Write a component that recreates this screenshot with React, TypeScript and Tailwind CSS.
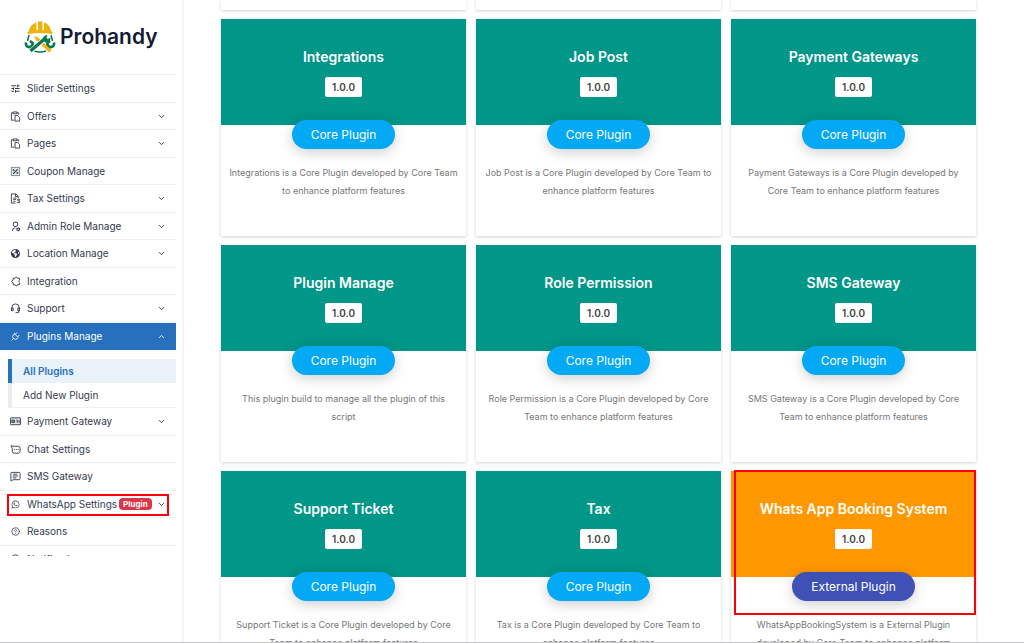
import React from "react";
import { ChevronDown, ChevronUp, CircleQuestionMark, MessageSquareText } from "lucide-react";
import { FaEarthAmericas, FaWhatsapp } from "react-icons/fa6";
import { MdTune } from "react-icons/md";
import { RiUserSettingsLine } from "react-icons/ri";
import { TbPlug } from "react-icons/tb";

type NavItem = {
  label: string;
  icon: React.ReactNode;
  expandable?: boolean;
  active?: boolean;
  badge?: string;
  children?: { label: string; active?: boolean }[];
};

type Plugin = {
  name: string;
  version: string;
  description: string[];
  external?: boolean;
  highlighted?: boolean;
};

const LineIcon: React.FC<{ children: React.ReactNode }> = ({ children }) => (
  <svg viewBox="0 0 24 24" fill="none" stroke="currentColor" strokeWidth="2" className="w-full h-full">
    {children}
  </svg>
);

const ClipboardIcon = () => (
  <LineIcon>
    <path d="M9 20H3V4h4M15 4h4v4" />
    <path d="M7 2h8v4H7zM11 10h6l4 4v8H11z" />
  </LineIcon>
);

const PercentIcon = () => (
  <LineIcon>
    <rect x="3" y="3" width="18" height="18" strokeOpacity="0.6" fill="currentColor" fillOpacity="0.12" />
    <path d="M17 7L7 17" strokeWidth="2.5" />
    <circle cx="8" cy="9" r="1.5" />
    <circle cx="16" cy="15" r="1.5" />
  </LineIcon>
);

const InvoiceIcon = () => (
  <LineIcon>
    <path d="M12 22H3V2h10l5 5v4M12 2v6h6M7 11h7M7 14h6M7 18h5" />
    <path d="M22 14h-5v3h4v4h-6" />
  </LineIcon>
);

const PuzzleIcon = () => (
  <LineIcon>
    <path d="M7 5h4a2.5 2.5 0 0 1 5 0h5v4a3.5 3.5 0 0 0 0 6v4h-5a2.5 2.5 0 0 1-5 0H7v-4a3 3 0 1 1 0-6z" />
  </LineIcon>
);

const HeadsetIcon = () => (
  <LineIcon>
    <path d="M4 16V10a8 8 0 0 1 16 0v6" />
    <path d="M3 11h4v6H3zM17 11h4v6h-4z" />
    <path d="M19 17v4h-7" />
  </LineIcon>
);

const CardIcon = () => (
  <LineIcon>
    <rect x="1" y="4" width="22" height="15" rx="1" fill="currentColor" fillOpacity="0.15" />
    <path d="M4 9h6v5H4zM7 9v6M14 9h2v6M20 9v6" />
  </LineIcon>
);

const ChatIcon = () => (
  <LineIcon>
    <path d="M2 4l3 5v7a4 4 0 0 0 4 4h9a4 4 0 0 0 4-4V9a4 4 0 0 0-4-4H9z" />
    <path d="M9 12h2M13 12h2M17 12h2" />
  </LineIcon>
);

const HardHatLogo = () => (
  <svg viewBox="0 0 32 32" className="w-8 h-8" aria-hidden="true">
    <g fill="none" stroke="#08794c">
      <path d="M5 14l-1.500 6M27 14l1.500 6" strokeWidth="1.5" />
      <path d="M10 30q6 2 12 0" strokeWidth="1.5" />
      <path d="M2 21.500q-.5 5 4 4.500 3-.5 2.500-4L6 20M30 21.500q.5 5-4 4.500-3-.5-2.500-4L26 20" strokeWidth="2.8" />
    </g>
    <path d="M10 15l4 1.500L27.500 29 25.500 31.500 12 19z" fill="#eeb20d" />
    <path d="M7 30L21 17.500" stroke="#fff" strokeWidth="5" />
    <path d="M6.500 30L21 17.500" stroke="#08794c" strokeWidth="3.2" />
    <path d="M19 19.500q-1-5 4.500-5.500l-1 3 1.500 1 2.500-1.500q0 5-5 5z" fill="#08794c" />
    <path d="M3 11.500l2-1.500C5.500 5.500 9 2.500 12.500 1.500V9H14V.5h4.500V9H20V1.500C23.500 2.500 26.500 5.500 27 10l2 1.500-1.500 1.500q-11.500-2-23 0z" fill="#eeb20d" />
  </svg>
);

const navItems: NavItem[] = [
  { label: "Slider Settings", icon: <MdTune /> },
  { label: "Offers", icon: <ClipboardIcon />, expandable: true },
  { label: "Pages", icon: <ClipboardIcon />, expandable: true },
  { label: "Coupon Manage", icon: <PercentIcon /> },
  { label: "Tax Settings", icon: <InvoiceIcon />, expandable: true },
  { label: "Admin Role Manage", icon: <RiUserSettingsLine />, expandable: true },
  { label: "Location Manage", icon: <FaEarthAmericas className="p-px" />, expandable: true },
  { label: "Integration", icon: <PuzzleIcon /> },
  { label: "Support", icon: <HeadsetIcon />, expandable: true },
  {
    label: "Plugins Manage",
    icon: <TbPlug />,
    expandable: true,
    active: true,
    children: [{ label: "All Plugins", active: true }, { label: "Add New Plugin" }],
  },
  { label: "Payment Gateway", icon: <CardIcon />, expandable: true },
  { label: "Chat Settings", icon: <ChatIcon /> },
  { label: "SMS Gateway", icon: <MessageSquareText className="w-full h-full" /> },
  { label: "WhatsApp Settings", icon: <FaWhatsapp className="p-px" />, expandable: true, badge: "Plugin" },
  { label: "Reasons", icon: <CircleQuestionMark className="w-full h-full p-px" /> },
  { label: "Notifications", icon: <CircleQuestionMark className="w-full h-full" /> },
];

const plugins: Plugin[] = [
  { name: "Integrations", version: "1.0.0", description: ["Integrations is a Core Plugin developed by Core Team", "to enhance platform features"] },
  { name: "Job Post", version: "1.0.0", description: ["Job Post is a Core Plugin developed by Core Team to", "enhance platform features"] },
  { name: "Payment Gateways", version: "1.0.0", description: ["Payment Gateways is a Core Plugin developed by", "Core Team to enhance platform features"] },
  { name: "Plugin Manage", version: "1.0.0", description: ["This plugin build to manage all the plugin of this", "script"] },
  { name: "Role Permission", version: "1.0.0", description: ["Role Permission is a Core Plugin developed by Core", "Team to enhance platform features"] },
  { name: "SMS Gateway", version: "1.0.0", description: ["SMS Gateway is a Core Plugin developed by Core", "Team to enhance platform features"] },
  { name: "Support Ticket", version: "1.0.0", description: ["Support Ticket is a Core Plugin developed by Core", "Team to enhance platform features"] },
  { name: "Tax", version: "1.0.0", description: ["Tax is a Core Plugin developed by Core Team to", "enhance platform features"] },
  {
    name: "Whats App Booking System",
    version: "1.0.0",
    description: ["WhatsAppBookingSystem is a External Plugin", "developed by Core Team to enhance platform"],
    external: true,
    highlighted: true,
  },
];

const SidebarItem: React.FC<{ item: NavItem }> = ({ item }) => {
  const Chevron = item.active ? ChevronUp : ChevronDown;

  return (
    <li className="group relative">
      <button
        type="button"
        aria-expanded={item.expandable ? !!item.active : undefined}
        className={`flex h-[27px] w-full items-center border-b px-[10px] text-left group-odd:h-7 cursor-pointer ${
          item.active ? "border-[#2670be] bg-[#2670be] text-white" : "border-[#f0f0f2] text-[#343b4f]"
        }`}
      >
        <span className="mr-[6px] h-[11px] w-[11px] shrink-0 text-[11px]">{item.icon}</span>
        <span className="whitespace-nowrap">{item.label}</span>
        {item.badge && (
          <span className="ml-[2px] rounded-sm bg-[#dc3545] px-1 text-[8px] leading-3 font-bold text-white">
            {item.badge}
          </span>
        )}
        {item.expandable && <Chevron className="ml-auto h-[9px] w-[9px] shrink-0" strokeWidth={2.5} />}
      </button>

      {/* Submenu */}
      {item.children && (
        <ul className="ml-2 mt-[9px] border-b border-[#f0f0f2]">
          {item.children.map((child) => (
            <li key={child.label}>
              <a
                href="#"
                className={`flex h-6 items-center border-l-4 pl-[11px] ${
                  child.active
                    ? "border-[#2670be] bg-[#e9f1f9] font-semibold text-[#2670be]"
                    : "border-[#ebebf0] text-[#343b4f]"
                }`}
              >
                {child.label}
              </a>
            </li>
          ))}
        </ul>
      )}

      {item.badge && (
        <span className="pointer-events-none absolute top-[3px] right-[7px] bottom-[2px] left-[7px] border-2 border-[#fb0007]" />
      )}
    </li>
  );
};

const PluginCard: React.FC<{ plugin: Plugin }> = ({ plugin }) => (
  <article className="relative h-[217px] bg-white text-center shadow-[0_1px_3px_rgba(0,0,0,0.18)]">
    <div
      className={`flex h-[106px] flex-col items-center pt-7 text-white ${
        plugin.external ? "bg-[#ff9800]" : "bg-[#009688]"
      }`}
    >
      <h2 className="text-sm leading-5 font-semibold">{plugin.name}</h2>
      <span className="mt-[10px] rounded-xs bg-white px-[7px] text-[10px] leading-5 font-semibold text-[#444]">
        {plugin.version}
      </span>
    </div>
    <button
      type="button"
      className={`relative mx-auto -mt-[5px] block h-[29px] rounded-full px-[19px] text-xs text-white shadow-[0_3px_14px_rgba(0,0,0,0.2)] cursor-pointer ${
        plugin.external ? "bg-[#3f51b5]" : "bg-[#03a9f4]"
      }`}
    >
      {plugin.external ? "External Plugin" : "Core Plugin"}
    </button>
    <p className="mt-[15px] text-[9px] leading-[18px] whitespace-pre-line text-[#777]">
      {plugin.description.join("\n")}
    </p>
    {plugin.highlighted && (
      <span className="pointer-events-none absolute -top-px right-0 left-[3px] h-[145px] border-2 border-[#fb0007]" />
    )}
  </article>
);

export default function App() {
  return (
    <div className="flex h-screen overflow-hidden border-b border-[#c8c8cb] bg-white font-['Inter',sans-serif]">
      <aside className="w-[184px] shrink-0 border-r-2 border-[#f6f6f8] text-[10px]">
        <div className="mr-[6px] flex h-[75px] items-center border-b border-[#f0f0f2] pl-6">
          <HardHatLogo />
          <span className="ml-1 text-[21px] font-semibold text-[#141c33]">Prohandy</span>
        </div>
        <nav className="mr-[6px] h-[calc(100vh-162px)] overflow-hidden">
          <ul>
            {navItems.map((item) => (
              <SidebarItem key={item.label} item={item} />
            ))}
          </ul>
        </nav>
      </aside>

      <main className="flex-1 overflow-hidden pr-12 pl-[37px]">
        <div className="grid grid-cols-3 gap-x-[10px] gap-y-[9px]">
          {/* Bottom edge of the row scrolled out of view */}
          {[0, 1, 2].map((n) => (
            <div key={n} className="h-[10px] bg-white shadow-[0_1px_3px_rgba(0,0,0,0.18)]" />
          ))}
          {plugins.map((plugin) => (
            <PluginCard key={plugin.name} plugin={plugin} />
          ))}
        </div>
      </main>
    </div>
  );
}
